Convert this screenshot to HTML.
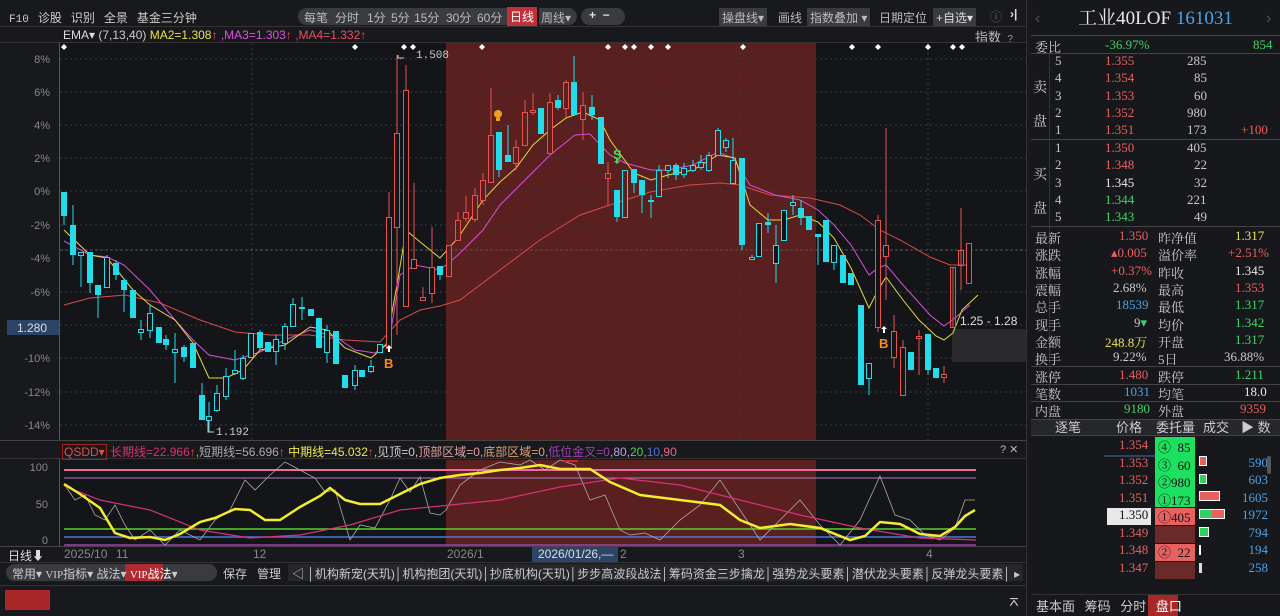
<!DOCTYPE html>
<html><head><meta charset="utf-8"><style>
*{margin:0;padding:0;box-sizing:border-box}
body{width:1280px;height:616px;background:#18191d;overflow:hidden;position:relative;font-family:"Liberation Sans","Noto Sans CJK SC",sans-serif;font-size:12px;color:#c8c8c8}
.a{position:absolute;white-space:nowrap}
.tb span{margin-right:9px}
.rp div.r{position:absolute;left:0;width:249px;height:17px;font-family:"Liberation Serif","Noto Serif CJK SC",serif;font-size:13px}
.rp .r span{position:absolute}
.red{color:#e8605e}.grn{color:#3fd36a}.wht{color:#e8e8e8}.blu{color:#4aa3ea}.yel{color:#e6e05a}
.tk{position:absolute;top:9px;color:#bbb;font-size:12px}
</style></head><body>
<div class="a tb" style="left:9px;top:9px;font-size:12px;color:#ccc"><span style="font-family:'Liberation Mono',monospace;font-size:11px">F10</span><span>诊股</span><span>识别</span><span>全景</span><span>基金三分钟</span></div>
<div class="a" style="left:298px;top:8px;height:17px;width:215px;background:#3a3b40;border-radius:9px"></div>
<span class="tk" style="left:304px">每笔</span><span class="tk" style="left:335px">分时</span><span class="tk" style="left:367px">1分</span><span class="tk" style="left:391px">5分</span><span class="tk" style="left:414px">15分</span><span class="tk" style="left:446px">30分</span><span class="tk" style="left:477px">60分</span>
<div class="a" style="left:507px;top:7px;background:#c0303a;color:#fff;padding:1px 3px">日线</div>
<div class="a" style="left:539px;top:8px;height:17px;width:38px;background:#3a3b40;border-radius:0 9px 9px 0;color:#bbb;padding:1px 2px">周线▾</div>
<div class="a" style="left:581px;top:8px;height:17px;width:44px;background:#3a3b40;border-radius:9px;color:#ddd;font-weight:bold;padding-left:8px">+ &nbsp;−</div>
<div class="a" style="left:719px;top:8px;background:#3a3b40;color:#bbb;padding:1px 3px">操盘线▾</div>
<div class="a" style="left:778px;top:9px;color:#bbb">画线</div>
<div class="a" style="left:807px;top:8px;background:#3a3b40;color:#bbb;padding:1px 3px">指数叠加 ▾</div>
<div class="a" style="left:879px;top:9px;color:#bbb">日期定位</div>
<div class="a" style="left:933px;top:8px;background:#3a3b40;color:#ddd;padding:1px 3px">+自选▾</div>
<div class="a" style="left:990px;top:8px;color:#666">ⓘ</div>
<div class="a" style="left:1010px;top:7px;color:#ddd;font-weight:bold">›|</div>
<div class="a" style="left:0;top:26px;width:1026px;height:1px;background:#333"></div>
<div class="a" style="left:63px;top:28px;font-size:12px"><span style="color:#ddd">EMA▾</span> <span style="color:#ccc">(7,13,40)</span> <span style="color:#e8e04a">MA2=1.308</span><span style="color:#e85050">↑</span> <span style="color:#e050e0">,MA3=1.303</span><span style="color:#e85050">↑</span> <span style="color:#e85060">,MA4=1.332</span><span style="color:#e85050">↑</span></div>
<div class="a" style="left:975px;top:27px;color:#bbb;font-size:13px">指数 <span style="font-size:10px;color:#999">&nbsp;?</span></div>

<svg class="a" style="left:0;top:0" width="1030" height="616">
<rect x="60" y="43" width="966" height="397" fill="#141519"/>
<rect x="446" y="43" width="370" height="397" fill="#5a1f1f"/>
<rect x="60" y="460" width="966" height="86" fill="#141519"/>
<rect x="446" y="460" width="370" height="86" fill="#5a1f1f"/>
<line x1="0" y1="42.5" x2="1026" y2="42.5" stroke="#333"/>
<line x1="59.5" y1="43" x2="59.5" y2="440" stroke="#555"/>
<g stroke="#3a3a40" stroke-dasharray="2,3">
<line x1="60" y1="59" x2="1026" y2="59"/><line x1="60" y1="92" x2="1026" y2="92"/><line x1="60" y1="125" x2="1026" y2="125"/><line x1="60" y1="158" x2="1026" y2="158"/><line x1="60" y1="191" x2="1026" y2="191"/><line x1="60" y1="225" x2="1026" y2="225"/><line x1="60" y1="292" x2="1026" y2="292"/><line x1="60" y1="325" x2="1026" y2="325"/><line x1="60" y1="358" x2="1026" y2="358"/><line x1="60" y1="392" x2="1026" y2="392"/><line x1="60" y1="425" x2="1026" y2="425"/>
<line x1="252" y1="43" x2="252" y2="440"/><line x1="740" y1="43" x2="740" y2="440"/><line x1="928" y1="43" x2="928" y2="440"/>
</g>
<line x1="60" y1="250" x2="1026" y2="250" stroke="#555" stroke-dasharray="3,2"/>
<g fill="#888" font-size="11" text-anchor="end" font-family="Liberation Sans">
<text x="50" y="63">8%</text><text x="50" y="96">6%</text><text x="50" y="129">4%</text><text x="50" y="162">2%</text><text x="50" y="195">0%</text><text x="50" y="229">-2%</text><text x="50" y="262">-4%</text><text x="50" y="296">-6%</text><text x="50" y="329">-8%</text><text x="50" y="362">-10%</text><text x="50" y="396">-12%</text><text x="50" y="429">-14%</text>
</g>
<rect x="7" y="320" width="52" height="15" fill="#2c4468"/><text x="17" y="332" fill="#ddd" font-size="12" font-family="Liberation Sans">1.280</text>
<rect x="952" y="329" width="74" height="33" fill="#2a2a2c"/>
<text x="960" y="325" fill="#ddd" font-size="12" font-family="Liberation Sans">1.25 - 1.28</text>
<g fill="#fff">
<path d="M64 44l3 3-3 3-3-3z"/><path d="M355 44l3 3-3 3-3-3z"/><path d="M404 44l3 3-3 3-3-3z"/><path d="M413 44l3 3-3 3-3-3z"/><path d="M482 44l3 3-3 3-3-3z"/><path d="M608 44l3 3-3 3-3-3z"/><path d="M625 44l3 3-3 3-3-3z"/><path d="M634 44l3 3-3 3-3-3z"/><path d="M651 44l3 3-3 3-3-3z"/><path d="M668 44l3 3-3 3-3-3z"/><path d="M743 44l3 3-3 3-3-3z"/><path d="M852 44l3 3-3 3-3-3z"/><path d="M878 44l3 3-3 3-3-3z"/><path d="M928 44l3 3-3 3-3-3z"/><path d="M953 44l3 3-3 3-3-3z"/><path d="M962 44l3 3-3 3-3-3z"/>
</g>
<polyline fill="none" stroke="#d84a4a" stroke-width="1" points="64,305 90,298 125,295 160,303 200,320 235,332 270,335 310,335 345,340 380,342 400,320 420,310 440,306 460,300 500,270 540,240 580,215 610,205 650,192 690,185 720,183 740,185 770,195 810,198 840,205 860,215 880,230 900,240 930,257 950,265 970,265"/>
<polyline fill="none" stroke="#d650d6" stroke-width="1" points="64,241 90,255 107,257 124,265 150,290 175,320 193,340 209,355 235,360 260,352 285,340 310,330 336,337 355,350 375,353 389,342 400,275 415,265 440,270 458,255 483,230 500,205 525,180 550,155 575,135 590,134 610,155 625,163 651,170 668,170 693,165 718,152 733,158 750,185 775,195 800,200 818,210 834,225 851,245 869,275 878,268 886,265 903,285 930,315 944,326 955,318 970,305"/>
<polyline fill="none" stroke="#e8d840" stroke-width="1" points="64,230 90,255 107,258 133,290 150,305 175,320 193,343 209,378 226,378 243,370 260,350 285,345 310,327 327,330 345,348 371,358 386,345 397,285 406,230 414,237 440,258 458,238 483,200 500,182 516,168 533,145 550,130 566,118 583,112 600,120 610,140 634,173 651,180 668,175 693,170 718,155 735,158 750,205 768,220 784,220 800,215 818,222 834,238 851,268 869,308 878,290 886,277 903,300 919,320 936,336 944,340 953,333 962,310 978,295"/>
<path stroke="#22dcea" stroke-width="1" fill="none" d="M64 192V225M73 205V265M81 252V287M90 252V293M98 285V318M107 255V287M116 260V280M124 278V312M133 290V318M141 320V340M150 305V338M159 327V343M166 335V350M175 333V383M184 345V362M193 343V368M202 383V420M209 402V432M217 385V412M226 368V400M235 350V375M243 355V380M251 333V357M260 330V350M268 342V352M276 335V365M285 323V350M293 298V326M302 297V320M311 309V316M319 318V348M327 325V363M336 331V364M345 375V388M355 365V390M362 370V377M371 360V373M380 344V352M440 266V280M499 132V177M508 125V162M541 108V134M558 95V110M574 56V115M592 95V120M601 117V164M617 190V222M625 170V217M634 169V193M642 180V213M651 195V218M659 165V196M668 165V178M676 163V180M684 163V178M693 160V172M701 155V170M709 152V172M718 128V155M726 138V152M733 138V183M742 158V250M752 255V260M759 223V256M768 213V233M776 225V283M784 210V240M793 195V215M801 200V225M809 216V230M818 234V265M826 220V262M834 245V270M843 255V283M851 273V285M861 305V385M869 363V395M911 352V370M928 334V375M936 368V378"/>
<g fill="#22dcea">
<rect x="61" y="192" width="6" height="24"/><rect x="70" y="225" width="6" height="30"/><rect x="87" y="252" width="6" height="31"/><rect x="95" y="285" width="6" height="10"/><rect x="113" y="263" width="6" height="12"/><rect x="121" y="280" width="6" height="10"/><rect x="130" y="290" width="6" height="28"/><rect x="156" y="327" width="6" height="16"/><rect x="163" y="339" width="6" height="6"/><rect x="181" y="347" width="6" height="10"/><rect x="190" y="343" width="6" height="25"/><rect x="199" y="395" width="6" height="25"/><rect x="257" y="332" width="6" height="16"/><rect x="265" y="342" width="6" height="10"/><rect x="308" y="309" width="6" height="7"/><rect x="316" y="318" width="6" height="30"/><rect x="333" y="331" width="6" height="33"/><rect x="342" y="375" width="6" height="13"/><rect x="359" y="370" width="6" height="7"/><rect x="437" y="266" width="6" height="9"/><rect x="496" y="132" width="6" height="38"/><rect x="505" y="155" width="6" height="7"/><rect x="538" y="108" width="6" height="26"/><rect x="555" y="100" width="6" height="8"/><rect x="571" y="82" width="6" height="33"/><rect x="589" y="107" width="6" height="8"/><rect x="598" y="117" width="6" height="47"/><rect x="614" y="190" width="6" height="27"/><rect x="631" y="169" width="6" height="14"/><rect x="639" y="180" width="6" height="15"/><rect x="673" y="165" width="6" height="10"/><rect x="739" y="158" width="6" height="87"/><rect x="765" y="222" width="6" height="3"/><rect x="798" y="208" width="6" height="10"/><rect x="806" y="216" width="6" height="14"/><rect x="815" y="234" width="6" height="3"/><rect x="823" y="220" width="6" height="42"/><rect x="840" y="255" width="6" height="28"/><rect x="848" y="273" width="6" height="12"/><rect x="858" y="305" width="6" height="80"/><rect x="908" y="352" width="6" height="18"/><rect x="925" y="334" width="6" height="36"/><rect x="933" y="368" width="6" height="10"/>
</g>
<g fill="#141519" stroke="#22dcea">
<rect x="78.5" y="252.5" width="5" height="3"/><rect x="104.5" y="257.5" width="5" height="30"/><rect x="138.5" y="329.5" width="5" height="3"/><rect x="147.5" y="313.5" width="5" height="17"/><rect x="172.5" y="349.5" width="5" height="3"/><rect x="206.5" y="416.5" width="5" height="4"/><rect x="214.5" y="393.5" width="5" height="17"/><rect x="223.5" y="376.5" width="5" height="20"/><rect x="232.5" y="370.5" width="5" height="3"/><rect x="240.5" y="358.5" width="5" height="20"/><rect x="248.5" y="333.5" width="5" height="24"/><rect x="273.5" y="339.5" width="5" height="12"/><rect x="282.5" y="326.5" width="5" height="17"/><rect x="290.5" y="304.5" width="5" height="22"/><rect x="299.5" y="307.5" width="5" height="1"/><rect x="324.5" y="330.5" width="5" height="22"/><rect x="352.5" y="370.5" width="5" height="15"/><rect x="368.5" y="366.5" width="5" height="5"/><rect x="377.5" y="344.5" width="5" height="8"/>
</g>
<g fill="#5a1f1f" stroke="#22dcea">
<rect x="622.5" y="170.5" width="5" height="47"/><rect x="648.5" y="200.5" width="5" height="1"/><rect x="656.5" y="170.5" width="5" height="26"/><rect x="665.5" y="165.5" width="5" height="5"/><rect x="681.5" y="168.5" width="5" height="6"/><rect x="690.5" y="165.5" width="5" height="5"/><rect x="698.5" y="162.5" width="5" height="5"/><rect x="706.5" y="155.5" width="5" height="15"/><rect x="715.5" y="130.5" width="5" height="25"/><rect x="723.5" y="140.5" width="5" height="7"/><rect x="730.5" y="160.5" width="5" height="23"/>
</g>
<g fill="#141519" stroke="#22dcea">
<rect x="749.5" y="257.5" width="5" height="2"/><rect x="756.5" y="223.5" width="5" height="33"/><rect x="773.5" y="245.5" width="5" height="18"/><rect x="781.5" y="210.5" width="5" height="30"/><rect x="790.5" y="202.5" width="5" height="3"/><rect x="831.5" y="245.5" width="5" height="17"/><rect x="866.5" y="363.5" width="5" height="15"/>
</g>
<path stroke="#e8524f" fill="none" d="M389 192V348M397 55V335M406 65V306M414 183V268M423 287V300M432 227V303M449 245V276M458 212V240M466 196V222M475 188V222M483 173V205M491 88V182M516 140V170M525 100V145M533 93V115M550 93V153M566 80V118M583 92V140M608 162V205M878 215V332M886 128V300M894 315V368M903 340V395M919 330V375M944 366V383M953 267V327M961 208V290M969 243V283"/>
<g stroke="#e8524f">
<rect x="386.5" y="217.5" width="5" height="131" fill="#141519"/><rect x="394.5" y="133.5" width="5" height="94" fill="#141519"/><rect x="403.5" y="90.5" width="5" height="216" fill="#141519"/><rect x="411.5" y="259.5" width="5" height="9" fill="#141519"/><rect x="420.5" y="297.5" width="5" height="3" fill="#141519"/><rect x="429.5" y="267.5" width="5" height="26" fill="#141519"/>
<rect x="446.5" y="245.5" width="5" height="31" fill="#5a1f1f"/><rect x="455.5" y="220.5" width="5" height="20" fill="#5a1f1f"/><rect x="463.5" y="212.5" width="5" height="6" fill="#5a1f1f"/><rect x="472.5" y="195.5" width="5" height="24" fill="#5a1f1f"/><rect x="480.5" y="180.5" width="5" height="20" fill="#5a1f1f"/><rect x="488.5" y="135.5" width="5" height="47" fill="#5a1f1f"/><rect x="513.5" y="147.5" width="5" height="16" fill="#5a1f1f"/><rect x="522.5" y="112.5" width="5" height="33" fill="#5a1f1f"/><rect x="530.5" y="110.5" width="5" height="2" fill="#5a1f1f"/><rect x="547.5" y="102.5" width="5" height="51" fill="#5a1f1f"/><rect x="563.5" y="82.5" width="5" height="26" fill="#5a1f1f"/><rect x="580.5" y="105.5" width="5" height="14" fill="#5a1f1f"/><rect x="605.5" y="173.5" width="5" height="5" fill="#5a1f1f"/>
<rect x="875.5" y="220.5" width="5" height="107" fill="#141519"/><rect x="883.5" y="245.5" width="5" height="11" fill="#141519"/><rect x="891.5" y="331.5" width="5" height="26" fill="#141519"/><rect x="900.5" y="347.5" width="5" height="48" fill="#141519"/><rect x="916.5" y="336.5" width="5" height="2" fill="#141519"/><rect x="941.5" y="374.5" width="5" height="3" fill="#141519"/><rect x="950.5" y="267.5" width="5" height="60" fill="none"/><rect x="958.5" y="250.5" width="5" height="15" fill="none"/><rect x="966.5" y="243.5" width="5" height="40" fill="#141519"/>
</g>
<path d="M398 55V58H404M208 420V432H214" stroke="#ccc" fill="none"/>
<text x="416" y="58" fill="#ccc" font-size="11" font-family="Liberation Mono">1.508</text>
<text x="216" y="435" fill="#ccc" font-size="11" font-family="Liberation Mono">1.192</text>
<text x="384" y="368" fill="#ff8a1a" font-size="13" font-weight="bold" font-family="Liberation Sans">B</text>
<path d="M389 345l-3 3h2v4h2v-4h2z" fill="#fff"/>
<text x="879" y="348" fill="#ff8a1a" font-size="13" font-weight="bold" font-family="Liberation Sans">B</text>
<path d="M884 326l-3 3h2v4h2v-4h2z" fill="#fff"/>
<text x="613" y="159" fill="#3fe05a" font-size="13" font-weight="bold" font-family="Liberation Sans">S</text>
<path d="M617 164l-3-3h2v-3h2v3h2z" fill="#3fe05a"/>
<circle cx="498" cy="114" r="4" fill="#f0a020"/><rect x="496" y="118" width="4" height="3" fill="#f0a020"/>

<line x1="0" y1="440.5" x2="1026" y2="440.5" stroke="#444"/>
<line x1="0" y1="458.5" x2="1026" y2="458.5" stroke="#333"/>
<line x1="59.5" y1="459" x2="59.5" y2="546" stroke="#555"/>
<g fill="#888" font-size="11" text-anchor="end" font-family="Liberation Sans"><text x="48" y="471">100</text><text x="48" y="508">50</text><text x="48" y="544">0</text></g>
<line x1="64" y1="470" x2="976" y2="470" stroke="#f06aa0" stroke-width="2"/>
<line x1="64" y1="478" x2="976" y2="478" stroke="#b080c0"/>
<line x1="64" y1="529" x2="976" y2="529" stroke="#5ad030" stroke-width="1.5"/>
<line x1="64" y1="537" x2="976" y2="537" stroke="#4a78d8" stroke-width="1.5"/>
<line x1="64" y1="545" x2="976" y2="545" stroke="#a040b0" stroke-width="1.5"/>
<polyline fill="none" stroke="#aaa" stroke-width="0.8" points="64,484 75,500 85,495 95,515 105,520 115,505 125,525 135,540 150,530 165,545 180,530 200,540 215,520 230,510 245,480 255,490 270,475 285,462 300,470 315,478 325,492 335,490 350,540 360,525 375,528 390,500 400,478 410,492 420,477 430,513 440,515 446,510 460,485 480,470 500,462 520,465 530,460 545,470 560,460 575,465 590,500 605,495 620,530 630,535 645,533 660,540 680,520 700,505 720,480 740,510 760,540 780,520 800,500 820,525 840,545 860,520 880,476 895,515 910,520 925,535 940,540 955,528 965,500 975,500"/>
<polyline fill="none" stroke="#d8307a" stroke-width="1.2" points="64,486 100,500 150,510 200,530 250,538 300,535 350,525 400,510 450,505 500,500 560,487 620,478 680,485 740,500 800,515 860,528 920,538 976,540"/>
<polyline fill="none" stroke="#f4ec30" stroke-width="2.5" points="64,484 80,494 100,508 115,533 130,538 150,537 165,540 180,534 200,522 215,518 235,509 250,510 265,520 280,520 300,507 320,496 330,488 345,500 360,504 380,504 400,494 420,484 440,478 460,475 480,473 500,470 520,468 540,465 560,469 590,469 610,482 640,495 680,500 720,505 740,520 760,528 790,524 820,528 850,540 865,536 880,522 900,524 920,534 940,536 955,527 965,516 975,510"/>
<rect x="564" y="460" width="14" height="2" fill="#e02020"/>
<line x1="0" y1="546.5" x2="1026" y2="546.5" stroke="#444"/>
<line x1="0" y1="562.5" x2="1026" y2="562.5" stroke="#333"/>
<rect x="532" y="547" width="86" height="15" fill="#2c4468"/>
<line x1="1026.5" y1="0" x2="1026.5" y2="616" stroke="#333"/>
</svg>
<div class="a" style="left:62px;top:443px;font-size:12px"><span style="color:#e05050;border:1px solid #a02020;padding:0 1px">QSDD▾</span> <span style="color:#e0306a">长期线=22.966</span><span style="color:#e85050">↑</span><span style="color:#aaa">,短期线=56.696</span><span style="color:#e85050">↑</span> <span style="color:#f0e840">中期线=45.032</span><span style="color:#e85050">↑</span><span style="color:#ccc">,见顶=0,</span><span style="color:#e0a0a0">顶部区域=0,</span><span style="color:#e0a070">底部区域=0,</span><span style="color:#a040b0">低位金叉=0</span><span style="color:#c0a0e0">,80,</span><span style="color:#50d050">20</span><span style="color:#aaa">,</span><span style="color:#4a78d8">10</span><span style="color:#aaa">,</span><span style="color:#f06090">90</span></div>
<div class="a" style="left:1000px;top:443px;color:#bbb;font-size:11px">? ✕</div>
<div class="a" style="left:8px;top:547px;color:#ddd;font-size:12px">日线⬇</div>
<div class="a" style="left:64px;top:547px;color:#888;font-size:12px">2025/10</div>
<div class="a" style="left:116px;top:547px;color:#888">11</div>
<div class="a" style="left:253px;top:547px;color:#888">12</div>
<div class="a" style="left:447px;top:547px;color:#888">2026/1</div>
<div class="a" style="left:538px;top:547px;color:#ddd">2026/01/26,—</div>
<div class="a" style="left:620px;top:547px;color:#888">2</div>
<div class="a" style="left:738px;top:547px;color:#888">3</div>
<div class="a" style="left:926px;top:547px;color:#888">4</div>
<div class="a" style="left:6px;top:564px;width:166px;height:17px;background:#3a3b40;border-radius:9px 0 0 9px"></div>
<div class="a" style="left:172px;top:564px;width:45px;height:17px;background:#3a3b40;border-radius:0 9px 9px 0"></div>
<div class="a" style="left:125px;top:564px;width:38px;height:17px;background:#b02a30"></div>
<div class="a" style="left:12px;top:565px;color:#ccc;font-size:12px">常用▾ <span style="font-family:'Liberation Serif','Noto Serif CJK SC',serif;font-size:11px">VIP</span>指标▾ 战法▾ <span style="color:#fff"><span style="font-family:'Liberation Serif',serif;font-size:11px">VIP</span>战法</span>▾</div>
<div class="a" style="left:223px;top:565px;color:#ccc">保存&nbsp;&nbsp; 管理</div>
<div class="a" style="left:288px;top:564px;width:735px;height:17px;background:#26272b"></div>
<div class="a" style="left:292px;top:565px;color:#ccc;font-size:12px">◁ │机构新宠(天玑)│机构抱团(天玑)│抄底机构(天玑)│步步高波段战法│筹码资金三步擒龙│强势龙头要素│潜伏龙头要素│反弹龙头要素│ ▸</div>
<div class="a" style="left:0;top:585px;width:1026px;height:1px;background:#333"></div>
<div class="a" style="left:5px;top:590px;width:45px;height:20px;background:#a8282a"></div>
<div class="a" style="left:1008px;top:593px;color:#ccc;font-weight:bold">⌅</div>
<div class="a rp" style="left:1031px;top:0;width:249px;height:616px;background:#17181c">
 <div class="a" style="left:0;top:4px;width:249px;height:30px;text-align:center;font-family:'Liberation Serif','Noto Serif CJK SC',serif;font-size:19px;color:#e8e8e8;line-height:30px">工业40LOF <span style="color:#4aa3ea">161031</span></div>
 <div class="a" style="left:4px;top:10px;color:#555;font-size:16px">‹</div><div class="a" style="left:235px;top:10px;color:#555;font-size:16px">›</div>
 <div class="a" style="left:0;top:35px;width:249px;height:1px;background:#444"></div>
 <div class="r" style="top:37px"><span style="left:4px;color:#ccc">委比</span><span class="grn" style="left:74px">-36.97%</span><span class="grn" style="left:222px">854</span></div>
 <div class="a" style="left:0;top:53px;width:249px;height:1px;background:#444"></div>
 <div class="a" style="left:18px;top:54px;width:1px;height:365px;background:#333"></div>
 <div class="a" style="left:2px;top:70px;color:#ccc;font-size:14px;line-height:34px;font-family:'Noto Serif CJK SC',serif">卖<br>盘</div>
 <div class="r" style="top:53px"><span style="left:24px">5</span><span class="red" style="left:74px">1.355</span><span style="left:156px">285</span></div>
 <div class="r" style="top:70px"><span style="left:24px">4</span><span class="red" style="left:74px">1.354</span><span style="left:163px">85</span></div>
 <div class="r" style="top:88px"><span style="left:24px">3</span><span class="red" style="left:74px">1.353</span><span style="left:163px">60</span></div>
 <div class="r" style="top:105px"><span style="left:24px">2</span><span class="red" style="left:74px">1.352</span><span style="left:156px">980</span></div>
 <div class="r" style="top:122px"><span style="left:24px">1</span><span class="red" style="left:74px">1.351</span><span style="left:156px">173</span><span class="red" style="left:210px">+100</span></div>
 <div class="a" style="left:0;top:139px;width:249px;height:1px;background:#444"></div>
 <div class="a" style="left:2px;top:157px;color:#ccc;font-size:14px;line-height:34px;font-family:'Noto Serif CJK SC',serif">买<br>盘</div>
 <div class="r" style="top:140px"><span style="left:24px">1</span><span class="red" style="left:74px">1.350</span><span style="left:156px">405</span></div>
 <div class="r" style="top:157px"><span style="left:24px">2</span><span class="red" style="left:74px">1.348</span><span style="left:163px">22</span></div>
 <div class="r" style="top:175px"><span style="left:24px">3</span><span class="wht" style="left:74px">1.345</span><span style="left:163px">32</span></div>
 <div class="r" style="top:192px"><span style="left:24px">4</span><span class="grn" style="left:74px">1.344</span><span style="left:156px">221</span></div>
 <div class="r" style="top:209px"><span style="left:24px">5</span><span class="grn" style="left:74px">1.343</span><span style="left:163px">49</span></div>
 <div class="a" style="left:0;top:226px;width:249px;height:1px;background:#444"></div>
 <div class="r" style="top:228px"><span style="left:4px">最新</span><span class="red" style="left:88px">1.350</span><span style="left:127px">昨净值</span><span class="yel" style="left:204px">1.317</span></div>
 <div class="r" style="top:245px"><span style="left:4px">涨跌</span><span class="red" style="left:80px">▴0.005</span><span style="left:127px">溢价率</span><span class="red" style="left:197px">+2.51%</span></div>
 <div class="r" style="top:263px"><span style="left:4px">涨幅</span><span class="red" style="left:80px">+0.37%</span><span style="left:127px">昨收</span><span class="wht" style="left:204px">1.345</span></div>
 <div class="r" style="top:280px"><span style="left:4px">震幅</span><span style="left:82px">2.68%</span><span style="left:127px">最高</span><span class="red" style="left:204px">1.353</span></div>
 <div class="r" style="top:297px"><span style="left:4px">总手</span><span class="blu" style="left:85px">18539</span><span style="left:127px">最低</span><span class="grn" style="left:204px">1.317</span></div>
 <div class="r" style="top:315px"><span style="left:4px">现手</span><span style="left:103px">9<span class="grn">▾</span></span><span style="left:127px">均价</span><span class="grn" style="left:204px">1.342</span></div>
 <div class="r" style="top:332px"><span style="left:4px">金额</span><span class="yel" style="left:74px">248.8万</span><span style="left:127px">开盘</span><span class="grn" style="left:204px">1.317</span></div>
 <div class="r" style="top:349px"><span style="left:4px">换手</span><span style="left:82px">9.22%</span><span style="left:127px">5日</span><span style="left:193px">36.88%</span></div>
 <div class="a" style="left:0;top:366px;width:249px;height:1px;background:#444"></div>
 <div class="r" style="top:367px"><span style="left:4px">涨停</span><span class="red" style="left:88px">1.480</span><span style="left:127px">跌停</span><span class="grn" style="left:204px">1.211</span></div>
 <div class="a" style="left:0;top:384px;width:249px;height:1px;background:#444"></div>
 <div class="r" style="top:384px"><span style="left:4px">笔数</span><span class="blu" style="left:93px">1031</span><span style="left:127px">均笔</span><span class="wht" style="left:213px">18.0</span></div>
 <div class="a" style="left:0;top:401px;width:249px;height:1px;background:#444"></div>
 <div class="r" style="top:401px"><span style="left:4px">内盘</span><span class="grn" style="left:93px">9180</span><span style="left:127px">外盘</span><span class="red" style="left:209px">9359</span></div>
 <div class="a" style="left:0;top:419px;width:249px;height:17px;background:#26272b;border-top:1px solid #444;border-bottom:1px solid #444"></div>
 <div class="a" style="left:0;top:419px;width:249px;color:#ccc;font-size:13px;line-height:17px"><span style="position:absolute;left:24px">逐笔</span><span style="position:absolute;left:85px">价格</span><span style="position:absolute;left:125px">委托量</span><span style="position:absolute;left:172px">成交</span><span style="position:absolute;left:210px">▶ 数</span></div>
 <div class="a" style="left:73px;top:455px;width:65px;height:2px;background:#2c4468"></div>
 <div class="a" style="left:124px;top:437px;width:40px;height:70px;background:#1ee060"></div>
 <div class="a" style="left:124px;top:508px;width:40px;height:17px;background:#e86060"></div>
 <div class="a" style="left:124px;top:526px;width:40px;height:17px;background:#6a2a2a"></div>
 <div class="a" style="left:124px;top:544px;width:40px;height:17px;background:#e86060"></div>
 <div class="a" style="left:124px;top:562px;width:40px;height:17px;background:#6a2a2a"></div>
 <div class="a" style="left:76px;top:508px;width:44px;height:17px;background:#e8e8e8"></div>
 <div class="a" style="left:168px;top:456px;width:8px;height:10px;background:#e86060;border:1px solid #fff"></div>
 <div class="a" style="left:168px;top:474px;width:8px;height:10px;background:#30d060;border:1px solid #fff"></div>
 <div class="a" style="left:168px;top:491px;width:21px;height:10px;background:#e86060;border:1px solid #fff"></div>
 <div class="a" style="left:168px;top:509px;width:26px;height:10px;background:linear-gradient(90deg,#30d060 50%,#e86060 50%);border:1px solid #fff"></div>
 <div class="a" style="left:168px;top:527px;width:10px;height:10px;background:#30d060;border:1px solid #fff"></div>
 <div class="a" style="left:168px;top:545px;width:2px;height:10px;background:#fff"></div>
 <div class="a" style="left:168px;top:563px;width:3px;height:10px;background:#ddd"></div>
 <div class="r" style="top:437px"><span class="red" style="left:88px">1.354</span><span style="left:127px;color:#111">④ &nbsp;85</span></div>
 <div class="r" style="top:455px"><span class="red" style="left:88px">1.353</span><span style="left:127px;color:#111">③ &nbsp;60</span><span class="blu" style="right:12px">590</span></div>
 <div class="r" style="top:472px"><span class="red" style="left:88px">1.352</span><span style="left:127px;color:#111">②980</span><span class="blu" style="right:12px">603</span></div>
 <div class="r" style="top:490px"><span class="red" style="left:88px">1.351</span><span style="left:127px;color:#111">①173</span><span class="blu" style="right:12px">1605</span></div>
 <div class="r" style="top:507px"><span style="left:88px;color:#111">1.350</span><span style="left:127px;color:#111">①405</span><span class="blu" style="right:12px">1972</span></div>
 <div class="r" style="top:525px"><span class="red" style="left:88px">1.349</span><span class="blu" style="right:12px">794</span></div>
 <div class="r" style="top:542px"><span class="red" style="left:88px">1.348</span><span style="left:127px;color:#111">② &nbsp;22</span><span class="blu" style="right:12px">194</span></div>
 <div class="r" style="top:560px"><span class="red" style="left:88px">1.347</span><span class="blu" style="right:12px">258</span></div>
 <div class="a" style="left:236px;top:456px;width:4px;height:18px;background:#555;border-radius:2px"></div>
 <div class="a" style="left:0;top:594px;width:249px;height:1px;background:#333"></div>
 <div class="a" style="left:117px;top:595px;width:30px;height:21px;background:#a8282a"></div>
 <div class="a" style="left:5px;top:596px;color:#ccc;font-size:13px;word-spacing:6px">基本面 筹码 分时 <span style="color:#fff">盘口</span></div>
</div>
</body></html>
